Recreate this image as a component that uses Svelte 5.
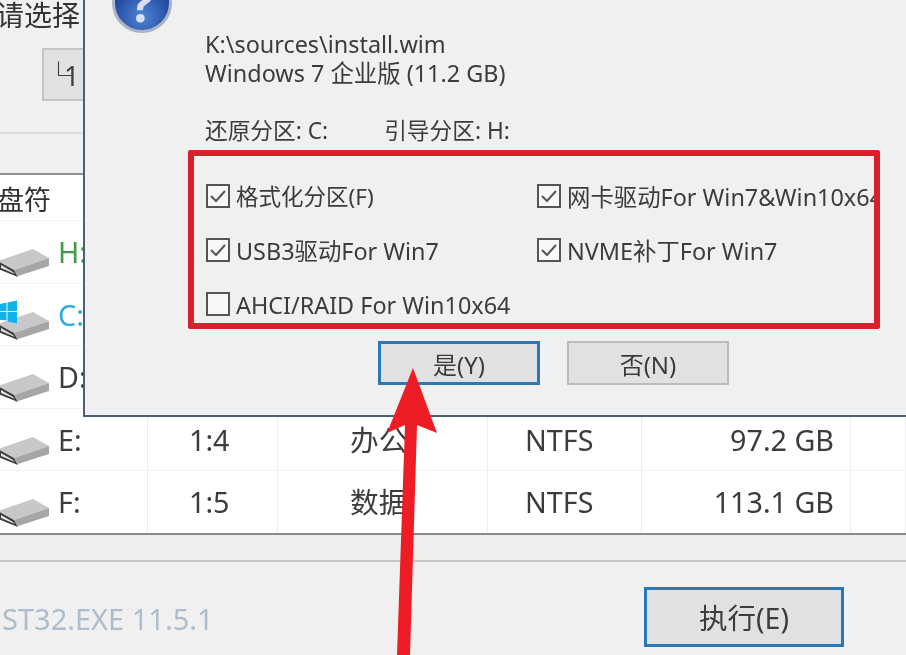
<script>
  const rows = [
    { letter: "H:", tone: "green" },
    { letter: "C:", tone: "blue", system: true },
    { letter: "D:" },
    { letter: "E:", slot: "1:4", label: "办公", fs: "NTFS", size: "97.2 GB" },
    { letter: "F:", slot: "1:5", label: "数据", fs: "NTFS", size: "113.1 GB" },
  ];

  const options = [
    { text: "格式化分区(F)", checked: true, cjk: true },
    { text: "网卡驱动For Win7&Win10x64", checked: true },
    { text: "USB3驱动For Win7", checked: true },
    { text: "NVME补丁For Win7", checked: true },
    { text: "AHCI/RAID For Win10x64", checked: false },
  ];
</script>

<div class="screen">
  <section class="top">
    <div class="title">请选择</div>
    <button class="part">└1</button>
  </section>

  <section class="table">
    <div class="head">盘符</div>
    {#each rows as row}
      <div class="row">
        <div class="cell drive">
          <svg class="disk" viewBox="0 0 52 30">
            <polygon points="0,13 35,1 51,10 16,22" fill="#c8c8c8" />
            <polygon points="16,22 51,10 51,18 20,28" fill="#a6a6a6" />
            <polygon points="0,13 16,22 20,29 0,21" fill="#3c3c3c" />
            <polygon points="3,17 15,24 17,26 3,20" fill="#e4e4e4" />
          </svg>
          {#if row.system}
            <svg class="win" viewBox="0 0 20 24">
              <polygon points="0,4 9,2 9,11 0,11" fill="#12b0ee" />
              <polygon points="10,2 20,0 20,11 10,11" fill="#12b0ee" />
              <polygon points="0,12 9,12 9,21 0,20" fill="#12b0ee" />
              <polygon points="10,12 20,12 20,24 10,22" fill="#12b0ee" />
            </svg>
          {/if}
          <span class="letter {row.tone}">{row.letter}</span>
        </div>
        <div class="cell slot">{row.slot ?? ""}</div>
        <div class="cell label">{row.label ?? ""}</div>
        <div class="cell fs">{row.fs ?? ""}</div>
        <div class="cell size">{row.size ?? ""}</div>
        <div class="cell"></div>
      </div>
    {/each}
  </section>

  <div class="strip"></div>

  <footer>
    <span class="version">ST32.EXE 11.5.1</span>
    <button class="run">执行(E)</button>
  </footer>

  <div class="dialog">
    <div class="help"><span>?</span></div>
    <div class="info">
      <div class="line">K:\sources\install.wim</div>
      <div class="line">Windows 7 企业版 (11.2 GB)</div>
      <div class="targets">
        <span>还原分区: C:</span>
        <span>引导分区: H:</span>
      </div>
      <div class="options">
        {#each options as opt}
          <div class="opt" class:cjk={opt.cjk}>
            <span class="box">
              {#if opt.checked}
                <svg viewBox="0 0 20 20">
                  <path d="M3 10 L8 15 L17 5" fill="none" stroke="#555" stroke-width="2" />
                </svg>
              {/if}
            </span>
            <span class="opt-text">{opt.text}</span>
          </div>
        {/each}
      </div>
      <div class="actions">
        <button class="yes">是(Y)</button>
        <button class="no">否(N)</button>
      </div>
    </div>
  </div>

  <svg class="arrow" viewBox="0 0 906 655">
    <polygon points="413,368 437,433 417,425 410,655 397,655 405,425 387,433" fill="#ee1c25" />
  </svg>
</div>

<style>
  :global(body) {
    margin: 0;
  }
  .screen {
    position: relative;
    width: 906px;
    height: 655px;
    overflow: hidden;
    display: flex;
    flex-direction: column;
    background: #f0f0f0;
    color: #3c3c3c;
    font-family: "Noto Sans", "Noto Sans CJK SC", sans-serif;
    filter: blur(0.7px);
  }
  button {
    font: inherit;
    color: #3c3c3c;
    background: #e1e1e1;
    padding: 0;
  }
  .top {
    height: 173px;
    box-sizing: border-box;
    flex: none;
    background: linear-gradient(#f0f0f0 132px, #ddd 132px, #ddd 134px, #f0f0f0 134px);
  }
  .title {
    margin-left: -4px;
    height: 48px;
    line-height: 30px;
    font-size: 28px;
    color: #333;
  }
  .part {
    margin-left: 42px;
    width: 200px;
    height: 53px;
    border: 2px solid #c4c4c4;
    text-align: left;
    padding-left: 1px;
    font-size: 27px;
    letter-spacing: -8px;
  }
  .table {
    flex: none;
    background: #fff;
    border-top: 2px solid #8f8f8f;
    border-bottom: 2px solid #8a8a8a;
  }
  .head {
    height: 45px;
    line-height: 50px;
    margin-left: -3px;
    font-size: 27px;
    color: #333;
  }
  .row {
    display: grid;
    grid-template-columns: 148px 130px 210px 154px 209px 55px;
    height: 62.6px;
    font-size: 28.7px;
    line-height: 62px;
    border-top: 1px solid #f2f2f2;
    box-sizing: border-box;
  }
  .cell {
    border-right: 1px solid #eee;
    white-space: nowrap;
    color: #3c3c3c;
  }
  .drive {
    position: relative;
    display: flex;
    gap: 8px;
  }
  .disk {
    width: 52px;
    height: 30px;
    margin: 27px 0 0 -2px;
    flex: none;
  }
  .win {
    position: absolute;
    left: -2px;
    top: 16px;
    width: 19px;
    height: 24px;
  }
  .green {
    color: #3d9b45;
  }
  .blue {
    color: #29abe2;
  }
  .slot {
    padding-left: 41px;
  }
  .label {
    padding-left: 72px;
  }
  .fs {
    padding-left: 37px;
  }
  .size {
    text-align: right;
    padding-right: 16px;
  }
  .strip {
    height: 25px;
    flex: none;
    background: #eee;
    border-bottom: 2px solid #c8c8c8;
  }
  footer {
    flex: 1;
    display: flex;
    align-items: flex-start;
    justify-content: space-between;
    padding: 25px 62px 0 2px;
  }
  .version {
    margin-top: 12px;
    font-size: 29px;
    color: #aebccb;
  }
  .run {
    width: 200px;
    height: 60px;
    border: 3px solid #2a78b8;
    font-size: 28.5px;
  }
  .dialog {
    position: absolute;
    left: 83px;
    top: -60px;
    width: 860px;
    height: 477px;
    box-sizing: border-box;
    border: 2px solid #4a6078;
    background: #f0f0f0;
    padding: 31px 0 0 27px;
    font-size: 23.4px;
    color: #3c3c3c;
  }
  .help {
    width: 60px;
    height: 60px;
    border-radius: 50%;
    box-sizing: border-box;
    border: 3px solid #a9b4c4;
    background: radial-gradient(circle at 50% 75%, #4f86d6, #1b3f96 70%);
    display: flex;
    align-items: center;
    justify-content: center;
    color: #d8dff0;
    font-size: 50px;
    line-height: 50px;
    font-weight: 700;
  }
  .info {
    padding-left: 93px;
  }
  .line {
    height: 29px;
    line-height: 29px;
  }
  .info .line:first-child {
    margin-top: -3px;
  }
  .targets {
    display: flex;
    gap: 56px;
    margin-top: 28px;
    line-height: 30px;
    font-size: 22.7px;
  }
  .options {
    box-sizing: border-box;
    width: 692px;
    height: 179px;
    margin: 4px 0 0 -17px;
    border: 6px solid #d9202b;
    border-radius: 2px;
    padding: 25px 0 0 12px;
    display: grid;
    grid-template-columns: 331px 1fr;
    grid-auto-rows: 30px;
    row-gap: 24px;
    overflow: hidden;
  }
  .opt {
    display: flex;
    align-items: center;
    gap: 6px;
    white-space: nowrap;
    line-height: 30px;
  }
  .opt.cjk {
    font-size: 22.5px;
  }
  .opt-text {
    padding-top: 2px;
  }
  .box {
    width: 24px;
    height: 24px;
    flex: none;
    box-sizing: border-box;
    border: 2px solid #555;
    background: #f8f8f8;
  }
  .box svg {
    display: block;
    width: 20px;
    height: 20px;
  }
  .actions {
    display: flex;
    gap: 27px;
    margin: 12px 0 0 173px;
  }
  .actions button {
    width: 162px;
    height: 44px;
    font-size: 24px;
  }
  .yes {
    border: 3px solid #2a78b8;
  }
  .no {
    border: 2px solid #bcbcbc;
  }
  .arrow {
    position: absolute;
    inset: 0;
    width: 906px;
    height: 655px;
  }
</style>
